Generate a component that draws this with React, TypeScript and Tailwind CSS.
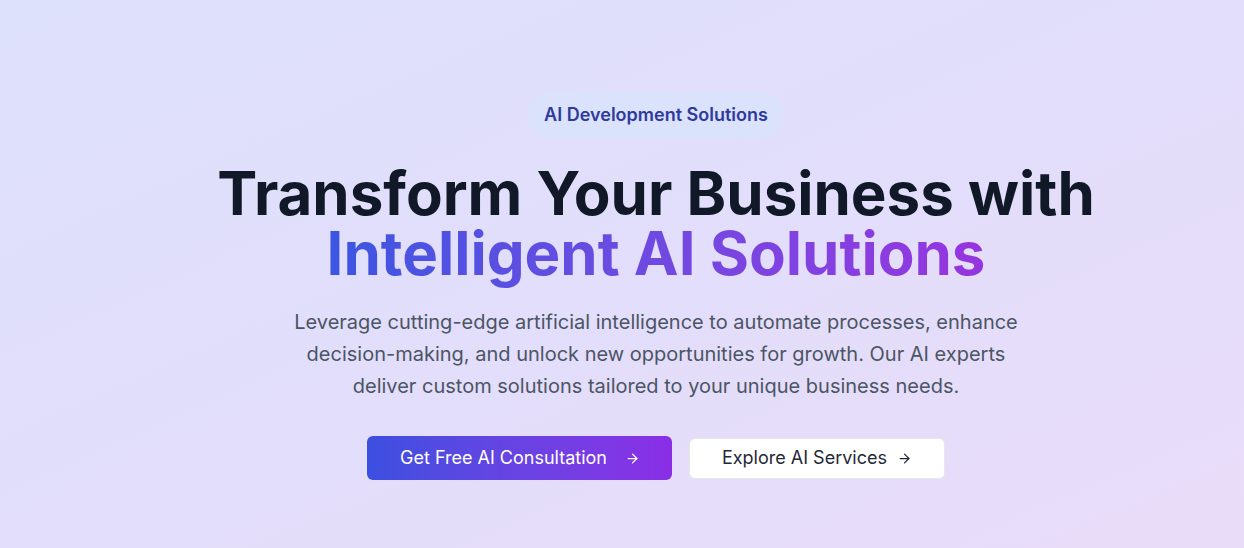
import { ArrowRight } from 'lucide-react';

const App = () => {
  return (
    <div
      className="min-h-[548px] w-full bg-gradient-to-br from-[#dee1fc] via-[#e2defb] to-[#e9dcf9] pl-[68px]"
      style={{ fontFamily: 'Inter, "Noto Sans", sans-serif' }}
    >
      <div className="mx-auto flex max-w-5xl flex-col items-center pt-[92px] text-center">
        <span className="mb-[25px] rounded-full bg-[#dae2fc] px-4 py-[9px] text-lg leading-7 font-semibold text-[#2f3a9c]">
          AI Development Solutions
        </span>

        <h1 className="mb-[23px] text-6xl leading-[60px] font-bold text-[#111827]">
          Transform Your Business with
          <br />
          <span className="bg-gradient-to-r from-[#3a55e2] to-[#9634e0] bg-clip-text text-transparent">
            Intelligent AI Solutions
          </span>
        </h1>

        <p className="mb-[34px] max-w-3xl text-xl leading-8 text-[#4b5563]">
          Leverage cutting-edge artificial intelligence to automate processes, enhance
          decision-making, and unlock new opportunities for growth. Our AI experts
          deliver custom solutions tailored to your unique business needs.
        </p>

        <div className="flex items-center gap-[17px]">
          <button className="flex h-[44px] items-center gap-[18px] rounded-md bg-gradient-to-r from-[#3b4fe0] to-[#8a2ee6] pr-8 pl-[33px] text-lg text-white">
            Get Free AI Consultation
            <ArrowRight size={15} strokeWidth={2} />
          </button>
          <button className="flex h-[41px] items-center gap-[10px] rounded-md border border-[#e5e7eb] bg-white px-8 text-lg text-[#1f2937]">
            Explore AI Services
            <ArrowRight size={15} strokeWidth={2} />
          </button>
        </div>
      </div>
    </div>
  );
};

export default App;
